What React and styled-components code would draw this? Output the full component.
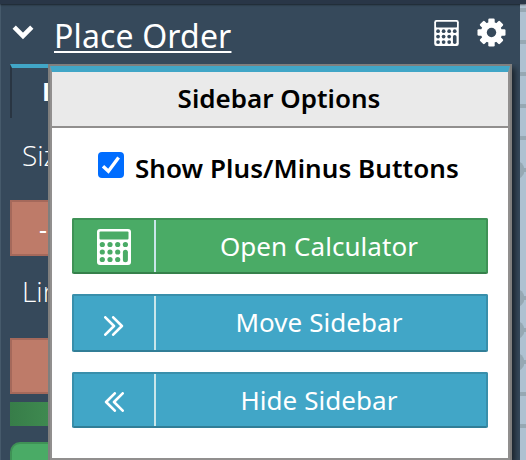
import React from "react";
import styled, { createGlobalStyle } from "styled-components";

const Global = createGlobalStyle`
  * { box-sizing: border-box; }
  body { margin: 0; overflow: hidden; background: #36495b; font-family: "Noto Sans", "Open Sans", sans-serif; }
`;

const Page = styled.div`
  position: relative;
  display: grid;
  grid-template: 4px 456px / 520px 6px;
  width: 526px;
  height: 460px;
  overflow: hidden;
`;
const TopStrip = styled.div`
  grid-column: 1 / 3;
  background: #293647;
  box-shadow: 0 1px 2px rgba(0, 0, 0, 0.5);
  z-index: 1;
`;
const Sidebar = styled.div`
  background: #36495b;
  border-left: 1px solid #465a6b;
  padding: 0 10px 0 9px;
  overflow: hidden;
`;
const ChartEdge = styled.svg`
  display: block;
`;
const TitleBar = styled.header`
  display: flex;
  align-items: flex-start;
  height: 60px;
  color: #fff;
`;
const Title = styled.h1`
  margin: 8px 0 0 14px;
  width: 180px;
  font-weight: 400;
  font-size: 32px;
  letter-spacing: 0.15px;
  line-height: 48px;
  white-space: nowrap;
  text-decoration: underline;
  text-decoration-thickness: 2px;
  text-underline-offset: 3px;
`;
const TitleIcon = styled.svg`
  display: block;
  flex: none;
  margin: ${(p) => p.$margin};
`;
const Tab = styled.div`
  height: 54px;
  border-top: 4px solid #41a6c7;
  border-left: 2px solid #293542;
  padding-left: 30px;
  color: #fff;
  font-family: "Open Sans", "Noto Sans", sans-serif;
  font-weight: 700;
  font-size: 25px;
  line-height: 46px;
`;
const FieldLabel = styled.div`
  height: 82px;
  padding: ${(p) => p.$top}px 0 0 12px;
  color: #fff;
  font-family: "Open Sans", "Noto Sans", sans-serif;
  font-weight: 300;
  font-size: 28px;
  line-height: 46px;
`;
const Stepper = styled.div`
  height: 56px;
  padding-left: 27px;
  border: 2px solid #a5695b;
  background: #be7b69;
  color: #fff;
  font-size: 25px;
  line-height: 54px;
`;
const Meter = styled.div`
  height: 24px;
  margin-top: 8px;
  background: linear-gradient(90deg, #377d49, #3f8a50 40px);
`;
const Submit = styled.div`
  height: 60px;
  margin-top: 16px;
  border: 2px solid #3f9256;
  border-radius: 10px;
  background: #4aab66;
`;

const Popover = styled.section`
  position: absolute;
  left: 48px;
  top: 64px;
  width: 464px;
  height: 396px;
  border: 2px solid #807f7e;
  border-bottom: 0;
  box-shadow: 3px 4px 6px rgba(0, 0, 0, 0.55);
  clip-path: inset(0 -8px 0 0);
`;
const PopoverBody = styled.div`
  height: 100%;
  border: 2px solid #918f8e;
  border-top: 6px solid #41a6c7;
  background: #fff;
`;
const PopoverTitle = styled.h2`
  height: 56px;
  margin: 0;
  border-bottom: 2px solid #918f8e;
  background: #eaeaea;
  color: #000;
  text-align: center;
  font-weight: 600;
  font-size: 26px;
  line-height: 52px;
  padding-right: 2px;
`;
const Option = styled.label`
  display: flex;
  align-items: center;
  height: 90px;
  padding: 0 0 10px 46px;
  color: #000;
  font-weight: 600;
  font-size: 26px;
  letter-spacing: 0.06px;
  line-height: 36px;
  white-space: nowrap;
`;
const CheckMark = styled.svg`
  flex: none;
  margin: -7px 11px 0 0;
`;
const Actions = styled.div`
  display: grid;
  grid-template-rows: 56px 58px 56px;
  gap: 20px;
  padding: 0 20px;
`;
const tones = {
  green: ["#4aab66", "#3f9256", "#36804b"],
  blue: ["#41a6c7", "#398fab", "#317e97"],
};
const Action = styled.button`
  display: grid;
  grid-template-columns: 82px 1fr;
  padding: 0;
  border: 2px solid ${(p) => tones[p.$tone][1]};
  border-bottom-color: ${(p) => tones[p.$tone][2]};
  border-radius: 2px;
  background: ${(p) => tones[p.$tone][0]};
  color: #fff;
  font: 400 26px/52px "Noto Sans", "Open Sans", sans-serif;
  letter-spacing: 0.06px;
`;
const ActionIcon = styled.span`
  display: flex;
  justify-content: center;
  align-items: center;
  padding: ${(p) => p.$drop}px 1px 0 0;
  border-right: 2px solid #c9e6ea;
`;
const ActionLabel = styled.span`
  padding-right: 4px;
`;

function Calculator({ width, height, hole }) {
  return (
    <svg width={width} height={height} viewBox="0 0 34 36">
      <rect width="34" height="36" rx="3" fill="#fff" />
      <rect x="2.5" y="2.5" width="29" height="8" rx="1" fill={hole} />
      {[15.5, 23, 30.5].map((y) =>
        [5.3, 13, 20.7, 28.4].map((x) =>
          x > 28 && y > 20 ? null : <circle key={x + "-" + y} cx={x} cy={y} r="2.6" fill={hole} />
        )
      )}
      <rect x="25.9" y="20.8" width="5" height="12.4" rx="2.5" fill={hole} />
    </svg>
  );
}

function Chevrons({ left }) {
  return (
    <svg width="20" height="20" viewBox="0 0 20 20" fill="none" stroke="#fff" strokeWidth="2.6" strokeLinecap="round" strokeLinejoin="round">
      <path d={left ? "M10.8 1.3 2.1 10l8.7 8.7M18.7 1.3 10 10l8.7 8.7" : "M1.3 1.3 10 10l-8.7 8.7M9.2 1.3 17.9 10l-8.7 8.7"} />
    </svg>
  );
}

export default function App() {
  return (
    <Page>
      <Global />
      <TopStrip />
      <Sidebar>
        <TitleBar>
          <TitleIcon $margin="21px 6px 0 2px" width="22" height="15" viewBox="0 0 22 15">
            <path d="M2.2 2.2 11 11l8.8-8.8" fill="none" stroke="#fff" strokeWidth="4.6" />
          </TitleIcon>
          <Title>Place Order</Title>
          <TitleIcon as="div" $margin="16px 18px 0 200px">
            <Calculator width={25} height={26} hole="#36495b" />
          </TitleIcon>
          <TitleIcon $margin="14px 0 0 0" width="29" height="29" viewBox="-14.5 -14.5 29 29">
            {[0, 45, 90, 135].map((a) => (
              <rect key={a} x="-3.2" y="-14" width="6.4" height="28" rx="1.2" fill="#fff" transform={`rotate(${a})`} />
            ))}
            <circle r="10.6" fill="#fff" />
            <circle r="4.7" fill="#36495b" />
          </TitleIcon>
        </TitleBar>
        <Tab>I</Tab>
        <FieldLabel $top={14}>Size</FieldLabel>
        <Stepper>-</Stepper>
        <FieldLabel $top={12}>Limit</FieldLabel>
        <Stepper />
        <Meter />
        <Submit />
      </Sidebar>
      <ChartEdge width="6" height="456" viewBox="0 4 6 456">
        <rect y="4" width="6" height="456" fill="#aec1d1" />
        {[10, 42, 74, 106, 138, 170, 298, 330, 362, 394, 426].map((y) => (
          <rect key={y} y={y - 2} width="6" height="4" fill="#96a8b3" />
        ))}
        {[170, 298, 330, 362].map((y) => (
          <circle key={y} cx="-5" cy={y} r="9.5" fill="#96a8b3" />
        ))}
      </ChartEdge>
      <Popover>
        <PopoverBody>
          <PopoverTitle>Sidebar Options</PopoverTitle>
          <Option>
            <CheckMark width="26" height="26" viewBox="0 0 26 26">
              <rect width="26" height="26" rx="4" fill="#006dff" />
              <path d="M5 14.2l5.4 5L20.6 5.5" fill="none" stroke="#fff" strokeWidth="3.4" />
            </CheckMark>
            Show Plus/Minus Buttons
          </Option>
          <Actions>
            <Action $tone="green">
              <ActionIcon $drop={1}><Calculator width={34} height={36} hole="#4aab66" /></ActionIcon>
              <ActionLabel>Open Calculator</ActionLabel>
            </Action>
            <Action $tone="blue">
              <ActionIcon $drop={6}><Chevrons /></ActionIcon>
              <ActionLabel>Move Sidebar</ActionLabel>
            </Action>
            <Action $tone="blue">
              <ActionIcon $drop={4}><Chevrons left /></ActionIcon>
              <ActionLabel>Hide Sidebar</ActionLabel>
            </Action>
          </Actions>
        </PopoverBody>
      </Popover>
    </Page>
  );
}
